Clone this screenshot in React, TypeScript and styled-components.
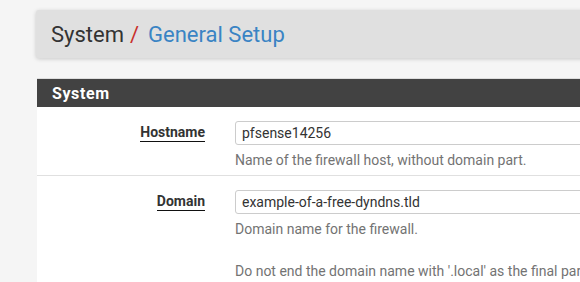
import React from "react";
import styled, { createGlobalStyle } from "styled-components";

const GlobalStyle = createGlobalStyle`
  body {
    margin: 0;
    background: #f5f5f5;
    font-family: Roboto, "Liberation Sans", sans-serif;
    overflow: hidden;
  }
`;

const Page = styled.div`
  width: 1100px;
  padding: 10px 0 0 36px;
`;

const Breadcrumb = styled.div`
  height: 48px;
  display: flex;
  align-items: center;
  padding-left: 15px;
  background: #e0e0e0;
  border-radius: 3px;
  box-shadow: 0 1px 4px rgba(0, 0, 0, 0.18);
  font-size: 22px;
  color: #333;
`;

const Slash = styled.span`
  color: #c9302c;
  margin: 0 9px 0 6px;
`;

const Current = styled.span`
  color: #3a84c4;
`;

const Panel = styled.div`
  margin-top: 20px;
  margin-left: 1px;
  background: #fff;
  border-top: 1px solid #ddd;
`;

const PanelHeading = styled.div`
  height: 28px;
  display: flex;
  align-items: center;
  padding-left: 15px;
  background: #424242;
  color: #fff;
  font-size: 16px;
  font-weight: 700;
  letter-spacing: 0.6px;
`;

const Row = styled.div<{ $last?: boolean }>`
  display: flex;
  padding: 14px 0 5px;
  border-bottom: ${(p) => (p.$last ? "none" : "1px solid #e0e0e0")};
`;

const LabelCol = styled.div`
  width: 168px;
  padding-right: 15px;
  display: flex;
  justify-content: flex-end;
  padding-top: 2px;
`;

const Label = styled.span`
  font-size: 14px;
  font-weight: 700;
  color: #333;
  line-height: 18px;
  height: 18px;
  border-bottom: 1px solid #111;
`;

const FieldCol = styled.div`
  flex: 1;
  padding-left: 15px;
`;

const Input = styled.div`
  height: 24px;
  box-sizing: border-box;
  border: 1px solid #ccc;
  border-radius: 3px;
  padding: 0 6px;
  display: flex;
  align-items: center;
  font-size: 14px;
  color: #333;
`;

const Help = styled.p<{ $gap?: boolean }>`
  margin: ${(p) => (p.$gap ? "22px" : "5px")} 0 0;
  font-size: 14px;
  line-height: 20px;
  color: #737373;
`;

export default function App() {
  return (
    <>
      <GlobalStyle />
      <Page>
        <Breadcrumb>
          System<Slash>/</Slash>
          <Current>General Setup</Current>
        </Breadcrumb>
        <Panel>
          <PanelHeading>System</PanelHeading>
          <Row>
            <LabelCol>
              <Label>Hostname</Label>
            </LabelCol>
            <FieldCol>
              <Input>pfsense14256</Input>
              <Help>Name of the firewall host, without domain part.</Help>
            </FieldCol>
          </Row>
          <Row $last>
            <LabelCol>
              <Label>Domain</Label>
            </LabelCol>
            <FieldCol>
              <Input>example-of-a-free-dyndns.tld</Input>
              <Help>Domain name for the firewall.</Help>
              <Help $gap>
                Do not end the domain name with '.local' as the final part
                (Top Level Domain, TLD).
              </Help>
            </FieldCol>
          </Row>
        </Panel>
      </Page>
    </>
  );
}
